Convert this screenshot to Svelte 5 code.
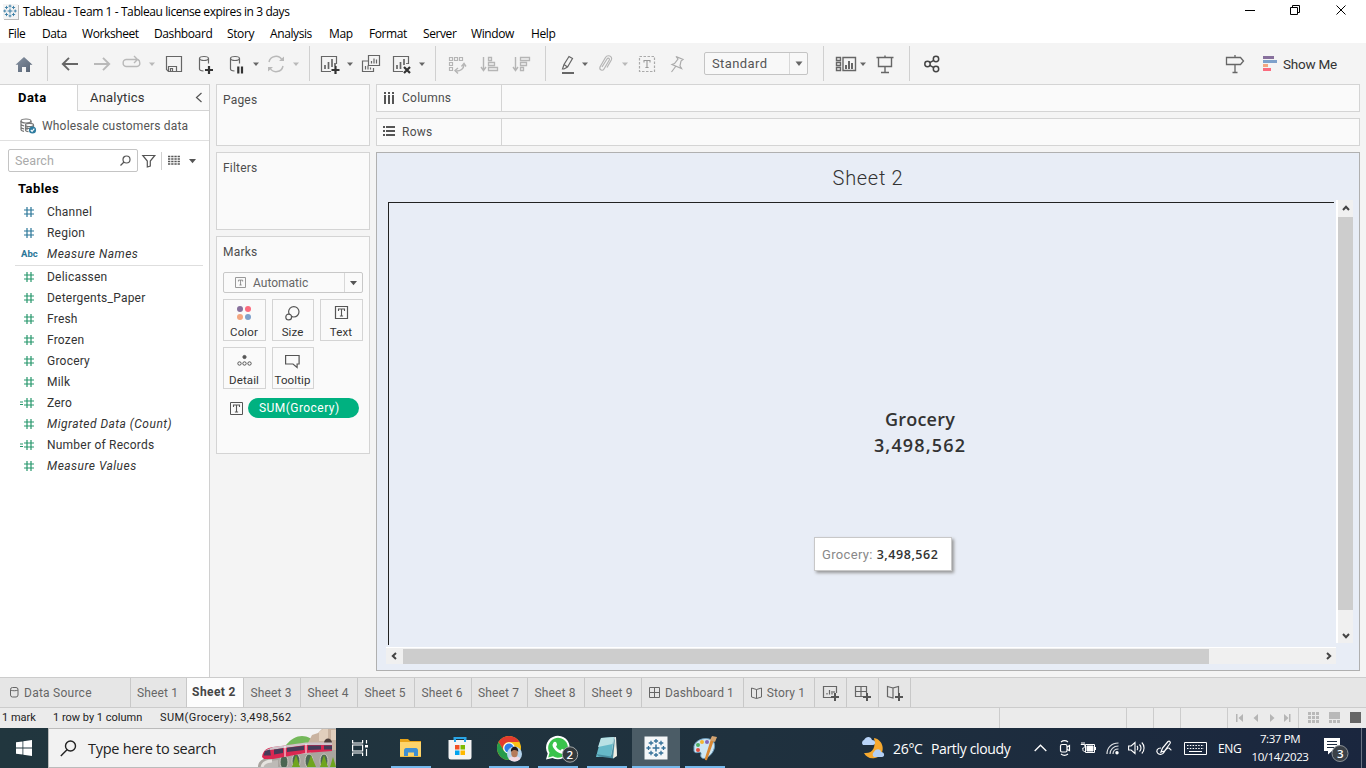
<script>
  const menus = [
    ['File', 34], ['Data', 40], ['Worksheet', 72], ['Dashboard', 73], ['Story', 43], ['Analysis', 59],
    ['Map', 40], ['Format', 54], ['Server', 48], ['Window', 60], ['Help', 40]
  ];

  const plus = (x, y, c = '#333') => `<path d="M${x} ${y - 4}v8M${x - 4} ${y}h8" stroke="${c}" stroke-width="2.2"/>`;
  const letterT = (x, y, c) => `<path d="M${x - 3} ${y - 1.5}v-2h6v2M${x} ${y - 3.5}v7M${x - 1.6} ${y + 3.5}h3.2" stroke="${c}" stroke-width="1.1"/>`;
  const tri = (x, y, c = '#666') => `<path d="M${x - 3} ${y - 1.5}h6l-3 3.6z" fill="${c}"/>`;
  const cyl = '<path d="M13.5 9.5V4.5M4.5 4.5v10.5c0 1 2 1.8 4 2" /><ellipse cx="9" cy="4.5" rx="4.5" ry="2"/>';
  const cross = (x, y, s, w, c) => `<path d="M${x - s} ${y}h${2 * s}M${x} ${y - s}v${2 * s}" stroke="${c}" stroke-width="${w}"/>`;
  const tableau = (c) =>
    cross(10, 10, 3.4, 1.5, c) + cross(10, 3, 2.1, 1.3, c) + cross(10, 17, 2.1, 1.3, c) + cross(2.500, 10, 2.1, 1.3, c) + cross(17.500, 10, 2.1, 1.3, c) +
    cross(5, 5, 2.3, 1.3, c) + cross(15, 5, 2.3, 1.3, c) + cross(5, 15, 2.3, 1.3, c) + cross(15, 15, 2.3, 1.3, c);

  const icons = {
    home: '<defs><linearGradient id="hg" x2="1" y2="1"><stop stop-color="#8793a3"/><stop offset="1" stop-color="#566273"/></linearGradient></defs><path d="M10 3L1.5 10.8H4V18h4v-5h4v5h4v-7.2h2.5z" fill="url(#hg)" stroke="none"/>',
    back: '<path d="M18 10H3M9 3.8L2.8 10 9 16.2" stroke-width="1.9"/>',
    forward: '<path d="M2 10h15M11 3.8l6.2 6.2-6.2 6.2" stroke="#b9b9b9" stroke-width="1.9"/>',
    redo: '<path d="M10 5.5H5a3 3 0 0 0-2.8 3.5A3 3 0 0 0 5 12.5h11a3 3 0 0 0 2.8-3.5c0-1.5-.8-3-2-3.5" stroke="#b9b9b9" stroke-width="1.4"/><path d="M10 5.5h6M13 2l3.5 3.5L13 9" stroke="#b9b9b9" stroke-width="1.4"/>',
    save: '<path d="M2.500 2.500h15v15H4.500l-2-2z"/><path d="M4.500 17.500v-5h8v5M6.500 17v-2.500h2V17"/>',
    dbadd: cyl + plus(14, 16),
    dbpause: cyl + '<path d="M12.3 12.5v7M16 12.5v7" stroke="#333" stroke-width="2.2"/>',
    refresh: '<path d="M3 8a7 7 0 0 1 13-2M17 12a7 7 0 0 1-13 2" stroke="#b9b9b9" stroke-width="1.5"/><path d="M13 7h5V2.500zM7 13H2v4.500z" fill="#b9b9b9" stroke="none"/>',
    newsheet: '<path d="M16.500 10V2.500h-15v15H11"/><path d="M5 15v-4M8.500 15V8M12 13V5M15 12V9" stroke-width="1.700"/>' + plus(15.5, 16),
    duplicate: '<path d="M8 7H1.500v10.500h11V14" /><path d="M7.500 1.500h11v10h-11z"/><path d="M10.500 9.500V7M13 9.500V4.500M15.500 9.500v-4M4.500 15.500V12M7 15.500v-4M9.500 15.500v-2" stroke-width="1.200"/>',
    clear: '<path d="M16.500 10V2.500h-15v15H11"/><path d="M5 15v-4M8.500 15V8M12 11V5M15 10V9" stroke-width="1.700"/><path d="M12 13l6 6M18 13l-6 6" stroke="#333" stroke-width="2.200"/>',
    swap: '<g stroke="#b5b5b5"><path d="M2.500 3.500h3v3h-3zM7.500 3.500h3v3h-3zM12.500 3.500h3v3h-3zM2.500 8.500h3v3h-3zM2.500 13.500h3v3h-3z"/><path d="M8.500 17c5 .5 8.500-2.500 8.500-6.500" stroke-width="1.400"/><path d="M14.500 12.500L17 9.500l2 3M11 14l-3 2.500 3 3" stroke-width="1.400"/></g>',
    asc: '<g stroke="#b5b5b5"><path d="M4.500 3v13M2 13l2.500 3.500L7 13" stroke-width="1.400"/><path d="M9.500 3.500h3v3h-3zM9.500 8.500h6v3h-6zM9.500 13.500h9v3h-9z" stroke-width="1.300"/></g>',
    desc: '<g stroke="#b5b5b5"><path d="M4.500 3v13M2 13l2.500 3.500L7 13" stroke-width="1.400"/><path d="M9.500 3.500h9v3h-9zM9.500 8.500h6v3h-6zM9.500 13.500h3v3h-3z" stroke-width="1.300"/></g>',
    highlight: '<path d="M4.500 15L6 10.500 11 2.500l3.500 2-5 8.500L6 15zM6 10.500l3.500 2.500"/><path d="M4 19h12" stroke-width="2"/>',
    clip: '<path d="M7 13l5-8c1-1.500 3-.5 2.300 1L9 15c-1.200 2.200-5 1.300-4-2l5.500-9.500c2-3.200 7.500-1.500 5.800 2.500L12 13.500" stroke="#b5b5b5"/>',
    text: '<path d="M2.500 2.500h15v15h-15z" stroke="#aaa" stroke-dasharray="2.500 1.500"/>' + letterT(10, 10, '#999'),
    pin: '<path d="M9 2.500l7 3-2 1.500-1 5 1.500 2.500-9.500-4 2.500-1 3.500-4.500zM9 12l-4.500 6" stroke="#aaa"/>',
    fit: '<path d="M1.500 3.500h4v3h-4zM1.500 8.500h4v3h-4zM1.500 13.500h4v3h-4zM8 3.500h12.500v13H8z" stroke-width="1.400"/><path d="M11 15v-4M14 15V7M17 15V9" stroke-width="2"/>',
    present: '<path d="M1.500 3.500h17M3.500 4v8.500h13V4M10 12.500V18M6 18.500h8M10 1.500v2" stroke-width="1.400"/>',
    share: '<g stroke="#444" stroke-width="1.500"><circle cx="5.500" cy="10" r="2.700"/><circle cx="14" cy="5" r="2.700"/><circle cx="14" cy="15" r="2.700"/><path d="M7.800 8.700l4-2.300M7.800 11.300l4 2.300"/></g>',
    guide: '<path d="M1.500 3.500h14l3 3.500-3 3.500h-14zM10 1v2.500M10 10.500V18M7.500 18.500h5" stroke-width="1.300"/>',
    filter: '<path d="M.8 1.500h12L8.300 7v5l-3 1V7z" stroke="#555"/>',
    list: '<path d="M0 2.500h12M0 5h12M0 7.500h12M0 10h12" stroke="#555" stroke-width="1.300" stroke-dasharray="2.300 .9"/>',
    dbsource: '<g stroke="#777"><ellipse cx="6" cy="3" rx="5" ry="2"/><path d="M1 3v8.500c0 1 1.500 1.500 3 1.800M11 3v2M1 6c0 1 1 1.600 3 1.800M1 9c0 1 1 1.600 3 1.800"/><ellipse cx="9.500" cy="7" rx="4" ry="1.700"/><path d="M5.500 7v5c0 1 1 1.500 3 1.700M13.500 7v3M5.500 10.500h6M7 9v3"/></g><circle cx="12.500" cy="12" r="3.600" fill="#2e7ca0" stroke="none"/><path d="M10.800 12l1.300 1.300 2.200-2.600" stroke="#fff"/>',
    sheetTab: '<path d="M13.500 8V1.500h-13v11H9"/><path d="M4 9.500V8M6.500 9.500V5M9 9.500V6M11 8V6"/>' + cross(12, 12, 4, 2, '#555'),
    dashTab: '<path d="M11.500 8V1.500H.5v10H8M6 1.500v10M.5 6.500h11"/>' + cross(12, 12, 4, 2, '#555'),
    storyTab: '<path d="M6 3L.5 1.500v10L6 13V3l5.500-1.500V8M6 3v10"/>' + cross(12, 12, 4, 2, '#555')
  };

  // [icon, gap before]; "|" is a divider, "v" a caret, "v-" a disabled caret
  const tools = [
    ['home', 14], ['|', 13], ['back', 12], ['forward', 12], ['redo', 9], ['v-', 7], ['save', 8], ['dbadd', 11], ['dbpause', 11],
    ['v', 6], ['refresh', 6], ['v-', 6], ['|', 9], ['newsheet', 10], ['v', 6], ['duplicate', 7], ['clear', 11], ['v', 6],
    ['|', 9], ['swap', 11], ['asc', 12], ['desc', 12], ['|', 14], ['highlight', 12], ['v', 3], ['clip', 6], ['v-', 6],
    ['text', 8], ['pin', 10], ['select', 17], ['|', 15], ['fit', 11], ['v', 2], ['present', 8], ['|', 14], ['share', 12]
  ];

  const dims = [['Channel', 'n'], ['Region', 'n'], ['Measure Names', 'a', true]];
  const measures = [
    ['Delicassen', 'n'], ['Detergents_Paper', 'n'], ['Fresh', 'n'], ['Frozen', 'n'], ['Grocery', 'n'], ['Milk', 'n'],
    ['Zero', 'c'], ['Migrated Data (Count)', 'n', true], ['Number of Records', 'c'], ['Measure Values', 'n', true]
  ];
  const sheets = [56, 57, 57, 57, 57, 57, 56, 57, 57];
</script>

{#snippet icon(name, w = 20, h = 20)}
  <svg class="ic" width={w} height={h} viewBox="0 0 {w} {h}" fill="none" stroke="#666" stroke-width="1.2">{@html icons[name]}</svg>
{/snippet}

{#snippet field([name, kind, italic], color)}
  <div class="field">
    {#if kind === 'a'}
      <span class="abc">Abc</span>
    {:else}
      <svg class="hash" width="18" height="12" viewBox="0 0 18 12" fill="none" stroke={color} stroke-width="1.2">
        <path d="M7 1v10M11 1v10M4 4h10M4 8h10" />
        {#if kind === 'c'}<path d="M0 5h3M0 7.500h3" />{/if}
      </svg>
    {/if}
    <span class:italic>{name}</span>
  </div>
{/snippet}

<div class="app">
  <header class="title">
    <span class="logo"><svg width="14" height="14" viewBox="0 0 20 20">{@html tableau('#3a7ea6')}</svg></span>
    <span class="cap">Tableau - Team 1 - Tableau license expires in 3 days</span>
    <svg class="win" width="110" height="20" viewBox="0 0 110 20" fill="none" stroke="#000">
      <path d="M0 10.500h10M45.500 7.500h7v7h-7zM47.500 7.500v-2h7v7h-2M91.500 5.500l9 9M100.500 5.500l-9 9" />
    </svg>
  </header>
  <nav class="menu">{#each menus as [m, w]}<span style:width="{w}px">{m}</span>{/each}</nav>

  <div class="toolbar">
    {#each tools as [t, g]}
      <div class="tool" style:margin-left="{g}px">
        {#if t === '|'}<i class="bar"></i>
        {:else if t[0] === 'v'}<svg width="8" height="8">{@html tri(4, 4, t === 'v' ? '#666' : '#b9b9b9')}</svg>
        {:else if t === 'select'}
          <div class="select"><span>Standard</span><b><svg width="10" height="8"><path d="M1.500 1.500h7L5 6z" fill="#666" /></svg></b></div>
        {:else}{@render icon(t, t === 'fit' ? 22 : 20)}{/if}
      </div>
    {/each}
    <div class="right">
      {@render icon('guide')}
      <svg class="sm" width="14" height="16"><path d="M0 0h11v3H0z" fill="#87709c" /><path d="M0 4h14v3H0z" fill="#7ea1cb" /><path d="M0 8h5v3H0z" fill="#f3a680" /><path d="M0 12h8v3H0z" fill="#fb6b7e" /></svg>
      <span>Show Me</span>
    </div>
  </div>

  <main>
    <aside class="data">
      <div class="ptabs">
        <b>Data</b>
        <div><span>Analytics</span><svg width="8" height="12" fill="none" stroke="#555" stroke-width="1.2"><path d="M6.500 1L1.500 5.500l5 4.500" /></svg></div>
      </div>
      <div class="source">{@render icon('dbsource', 17, 16)}<span>Wholesale customers data</span></div>
      <div class="find">
        <div class="box"><span>Search</span><svg width="11" height="11" fill="none" stroke="#555" stroke-width="1.2"><circle cx="6.500" cy="4.500" r="3.500" /><path d="M4 7L.5 10.500" /></svg></div>
        {@render icon('filter', 14, 14)}
        <i></i>
        {@render icon('list', 12, 14)}
        <svg width="8" height="6"><path d="M0 1h7L3.500 5.200z" fill="#555" /></svg>
      </div>
      <h4>Tables</h4>
      {#each dims as f}{@render field(f, '#2a7698')}{/each}
      <hr />
      {#each measures as f}{@render field(f, '#27976c')}{/each}
    </aside>

    <section class="shelves">
      <div class="card pages">Pages</div>
      <div class="card filters">Filters</div>
      <div class="card marks">
        <div class="mh">Marks</div>
        <div class="auto">
          <svg width="11" height="11" fill="none"><path d="M.5.5h10v10H.5z" stroke="#999" />{@html `<g transform="translate(1.700 1.700) scale(.7)">${letterT(5.5, 5.5, '#777')}</g>`}</svg>
          <span>Automatic</span>
          <b><svg width="9" height="6"><path d="M1 1h7L4.500 5.200z" fill="#555" /></svg></b>
        </div>
        <div class="btns">
          <div class="btn"><svg width="14" height="14"><circle cx="3" cy="3" r="3" fill="#87709c" /><circle cx="11" cy="3" r="3" fill="#fb6b7e" /><circle cx="3" cy="11" r="3" fill="#f3a680" /><circle cx="11" cy="11" r="3" fill="#7ea1cb" /></svg>Color</div>
          <div class="btn"><svg width="15" height="15" fill="none" stroke="#555" stroke-width="1.2"><circle cx="8.800" cy="5.800" r="5.200" /><circle cx="3.700" cy="11" r="2.900" fill="#fafafa" /></svg>Size</div>
          <div class="btn"><svg width="13" height="13" fill="none" stroke="#555" stroke-width="1.200"><path d="M.5.5h12v12H.5z" />{@html letterT(6.5, 6.5, '#555')}</svg>Text</div>
          <div class="btn"><svg width="15" height="13" fill="none" stroke="#555"><circle cx="7.500" cy="3" r="1.600" fill="#555" /><circle cx="2.500" cy="9.500" r="1.700" /><circle cx="7.500" cy="9.500" r="1.700" /><circle cx="12.500" cy="9.500" r="1.700" /></svg>Detail</div>
          <div class="btn"><svg width="15" height="14" fill="none" stroke="#555" stroke-width="1.200"><path d="M.6 1.500h13.500v8.500h-2v3.500L8 10H.6z" /></svg>Tooltip</div>
        </div>
        <div class="pillrow">
          <svg width="13" height="13" fill="none" stroke="#555"><path d="M.5.5h12v12H.5z" />{@html letterT(6.5, 6.5, '#555')}</svg>
          <span class="pill">SUM(Grocery)</span>
        </div>
      </div>
    </section>

    <section class="work">
      <div class="shelf"><div><svg width="12" height="12" fill="#555"><path d="M1 0h2v2H1zM5 0h2v2H5zM9 0h2v2H9zM1 3h2v9H1zM5 3h2v9H5zM9 3h2v9H9z" /></svg>Columns</div></div>
      <div class="shelf"><div><svg width="12" height="12" fill="#555"><path d="M0 0h2v2H0zM0 4h2v2H0zM0 8h2v2H0zM3 0h9v2H3zM3 4h9v2H3zM3 8h9v2H3z" /></svg>Rows</div></div>
      <div class="viz">
        <h2>Sheet 2</h2>
        <div class="pane">
          <div class="frame">
            <p>Grocery<br /><span>3,498,562</span></p>
            <div class="tip"><span>Grocery:</span> 3,498,562</div>
          </div>
          <div class="vs">
            <svg width="8" height="6" fill="none" stroke="#444" stroke-width="2"><path d="M1 5l3-3.200L7 5" /></svg>
            <i></i>
            <svg width="8" height="6" fill="none" stroke="#444" stroke-width="2"><path d="M1 1l3 3.200L7 1" /></svg>
          </div>
          <div class="hs">
            <svg width="6" height="8" fill="none" stroke="#444" stroke-width="2"><path d="M5 1L1.800 4 5 7" /></svg>
            <i></i>
            <svg width="6" height="8" fill="none" stroke="#444" stroke-width="2"><path d="M1 1l3.200 3L1 7" /></svg>
          </div>
        </div>
      </div>
    </section>
  </main>

  <div class="tabs">
    <div class="tab src"><svg width="9" height="12" fill="none" stroke="#666"><rect x=".5" y=".5" width="7.500" height="9.500" rx="2" /><path d="M.5 3c2 1 5.500 1 7.500 0" /></svg>Data Source</div>
    {#each sheets as w, i}<div class="tab" class:on={i === 1} style:width="{w}px">Sheet {i + 1}</div>{/each}
    <div class="tab dash"><svg width="11" height="11" fill="none" stroke="#666"><path d="M.5.5h10v10H.5zM5.500.5v10M.5 5.500h10" /></svg>Dashboard 1</div>
    <div class="tab story"><svg width="11" height="12" fill="none" stroke="#666"><path d="M5.500 2.500L.5 1v9l5 1.500 5-1.500V1zM5.500 2.500v9" /></svg>Story 1</div>
    <div class="tab new">{@render icon('sheetTab', 16, 16)}</div>
    <div class="tab new">{@render icon('dashTab', 16, 16)}</div>
    <div class="tab new">{@render icon('storyTab', 16, 16)}</div>
  </div>

  <div class="status">
    <span class="s1">1 mark</span><span class="s2">1 row by 1 column</span><span class="s3">SUM(Grocery): 3,498,562</span>
    <div class="cells">
      <i style:width="127px"></i><i style:width="27px"></i><i style:width="27px"></i><i style:width="47px"></i>
      <i style:width="71px"><svg width="54" height="8" fill="#b5b5b5"><path d="M0 0h1.500v8H0zM7 0v8L2.500 4zM22 0v8l-4.500-4zM34 0v8l4.500-4zM48 0v8l4.500-4zM53 0h1.500v8H53z" /></svg></i>
      <i style:width="67px"><svg width="54" height="12" fill="#b9b9b9"><path d="M0 0h3v3H0zM4 0h3v3H4zM8 0h3v3H8zM0 4h3v3H0zM4 4h3v3H4zM8 4h3v3H8zM0 8h3v3H0zM4 8h3v3H4zM8 8h3v3H8zM21 0h11v7H21zM21 8h3v3h-3zM25 8h3v3h-3zM29 8h3v3h-3z" /><path d="M42 0h11v11H42z" fill="#666" /></svg></i>
    </div>
  </div>

  <footer>
    <div class="start"><svg width="16" height="16" fill="#fff"><path d="M0 2.300L6.500 1.400v6.200H0zM7.300 1.300L16 0v7.600H7.300zM0 8.400h6.500v6.200L0 13.700zM7.300 8.400H16V16l-8.700-1.300z" /></svg></div>
    <div class="search">
      <svg width="17" height="17" fill="none" stroke="#222" stroke-width="1.400"><circle cx="10.500" cy="6" r="5" /><path d="M7 9.700L.8 16" /></svg>
      <span>Type here to search</span>
      <svg class="train" width="80" height="38" viewBox="0 0 80 38">
        <path d="M30 16C40 4 52 4 62 16v4H30z" fill="#74b85a" />
        <path d="M52 14l4-8 6-2 4-4h14v38H60z" fill="#c9b3a0" /><path d="M63 3l4-3h5v12h-9zM75 1h5v10h-5z" fill="#e1cfbd" />
        <path d="M68 14c0-6 8-6 8 0v6h-8z" fill="#4d403c" />
        <path d="M2 38c0-6 5-9 12-9l62-8h4v17z" fill="#a9a59f" />
        <path d="M5 38c1-4 5-6 10-6l7-1v7z" fill="#bdbab6" /><path d="M6 38c1-4 5-6 10-6" stroke="#e5e3df" stroke-width="3" fill="none" />
        <g fill="#4b6652" stroke="#cbc7c1"><ellipse cx="28" cy="33" rx="4" ry="7" /><ellipse cx="40" cy="32" rx="4" ry="7" /><ellipse cx="53" cy="32" rx="4" ry="7" /><ellipse cx="68" cy="32" rx="4" ry="7" /></g>
        <path d="M36 38l4-12 4 12zM51 38l4-12 5 12zM64 38l4-12 4 12zM74 38l3-10 3 10z" fill="#6fa51e" />
        <path d="M6 28C7 21 11 19 17 18L50 14h26v8L50 24 17 30H8z" fill="#d92751" />
        <path d="M8 22l9-4L50 13.500h26v2.500H50L14 21z" fill="#cfc4ca" />
        <path d="M9 22l5-1.500 1 6H7.500zM18 20.500l9-1.300V24l-9 1.500zM31 18.700l17-2v4.300l-17 2zM52 16.500h13v4L52 21zM68 16.500h8v4h-8z" fill="#453b58" />
        <path d="M29 17v11M50 15v9" stroke="#fff" stroke-width="1" />
      </svg>
    </div>
    <div class="tk view"><svg width="17" height="16" fill="none" stroke="#fff" stroke-width="1.200"><path d="M.6 0v3h10V0M.6 5h10v6H.6zM.6 16v-3h10v3M14.500 0v3.500M14.500 9v7" /><path d="M13 5h3v2.500h-3z" fill="#fff" stroke="none" /></svg></div>
    <div class="tk run"><svg width="24" height="24"><path d="M1 3h8l2 2h11v16H1z" fill="#e8a317" /><path d="M1 6h21v14.500H1z" fill="#fdd46b" /><path d="M5 20v-5.500C5 13 6 12 7 12h10c1 0 2 1 2 2.500V20h-4v-3.500H9V20z" fill="#3f8fd2" /></svg></div>
    <div class="tk"><svg width="24" height="26"><path d="M6.500 8V3h11v5" fill="none" stroke="#29a6e8" stroke-width="2" /><path d="M.5 5h23v17a2.500 2.500 0 0 1-2.500 2.500H3A2.500 2.500 0 0 1 .5 22z" fill="#f4f4f4" /><path d="M7 4v3M17 4v3" stroke="#29a6e8" stroke-width="2" /><path d="M7 10h4.500v4.500H7z" fill="#f25022" /><path d="M12.500 10H17v4.500h-4.500z" fill="#7fba00" /><path d="M7 15.500h4.500V20H7z" fill="#00a4ef" /><path d="M12.500 15.500H17V20h-4.500z" fill="#ffb900" /></svg></div>
    <div class="tk run"><svg width="26" height="26"><circle cx="13" cy="13" r="12" fill="#fbc116" /><path d="M2.600 7A12 12 0 0 1 23.400 7H13a6 6 0 0 0-5.200 9z" fill="#e33b2e" /><path d="M2.600 7A12 12 0 0 0 13 25l5-9H8z" fill="#269b4b" /><circle cx="13" cy="13" r="5.800" fill="#fff" /><circle cx="13" cy="13" r="4.600" fill="#2f7de8" /><circle cx="18.500" cy="19" r="7.500" fill="#b4d4ed" /><path d="M12.500 23.500c2-3 10-3 12 0-3 4-9 4-12 0z" fill="#f0d9e3" /><ellipse cx="18.500" cy="18" rx="3.300" ry="4.200" fill="#b57b5b" /><path d="M15 17c-1-7 8-7 7.200 0-1-2-5-3-7.200 0z" fill="#20191a" /></svg></div>
    <div class="tk run wa"><svg width="34" height="26"><path d="M1 24.500l1.700-6A11.800 11.800 0 1 1 7.500 23z" fill="#fff" /><path d="M3.200 22.500l1.300-4.700A9.900 9.900 0 1 1 8 21.300z" fill="#3ac34c" /><path d="M8.500 7.500c2-2 3.500.5 3.500 2.500l-1 1.500c1 2 2.500 3.200 4.500 4l1.500-1.700 3.200 1.700c0 3-3.200 3.700-5.200 2.700-4-1.500-7.500-5.500-7.500-8.500z" fill="#fff" /><circle cx="25" cy="19.500" r="7.700" fill="#333a3d" stroke="#a0a5a7" /></svg><em>2</em></div>
    <div class="tk run"><svg width="26" height="26"><path d="M8 4l14-2 1 18-4 3z" fill="#e9edeb" /><path d="M7 3l13-1-3 20H2z" fill="#66b9c8" /><path d="M7 3l13-1-1.500 7L4 12z" fill="#b9e1e4" /><path d="M2 19l15 2.500 3.500-19 2 18-3 3-14.500-2z" fill="#498da0" /><path d="M21 4l2 17-4 2.500z" fill="#f1eee2" /></svg></div>
    <div class="tk active"><svg width="24" height="24" viewBox="0 0 24 24"><path d="M.5.5h23v23H.5z" fill="#f5f7f8" /><g transform="translate(2 2)">{@html tableau('#357199')}</g></svg></div>
    <div class="tk run"><svg width="26" height="26"><path d="M2 11C4 4 15 1 21 6c4 5 0 14-7 17-4 1.500-6-1-5-4 1-4-6 1-7-3z" fill="#cfe7f4" stroke="#6b9cbd" /><circle cx="6" cy="15" r="2" fill="#df4c3f" /><circle cx="6" cy="10" r="2" fill="#4bad65" /><circle cx="10" cy="7" r="2" fill="#f4b731" /><circle cx="15" cy="7" r="2" fill="#8167bb" /><path d="M22 5l-7 20c-2 1-2.500-1-2-2L19 4z" fill="#d98834" /><path d="M18 5l2-4 5 1-2 5z" fill="#d2a371" /></svg></div>
    <div class="tray">
      <svg class="weather" width="26" height="24"><path d="M14 2c11 2 12 18 1 20-5 1-9-1-11-5 9 1 12-6 10-15z" fill="#f7a92f" /><path d="M3 9a3 3 0 0 1 1-5c2-4 7-4 8 0 4 0 4 5 1 5z" fill="#b9d4f8" /><path d="M14 21a3 3 0 0 1 0-5c2-4 7-3 7 0 4 0 4 5 1 5z" fill="#b3cff5" /></svg>
      <span class="temp">26°C</span><span class="cond">Partly cloudy</span>
      <svg class="up" width="13" height="8" fill="none" stroke="#fff" stroke-width="1.300"><path d="M.7 7l5.800-5.800L12.300 7" /></svg>
      <svg class="cam" width="12" height="16" fill="none" stroke="#fff" stroke-width="1.200"><rect x="1.500" y="4.500" width="6.500" height="7.500" rx="1.500" /><path d="M8 7l2.500-1.500v5L8 9.500M2 2c2-1.500 5-1.500 7 0M2 14c2 1.500 5 1.500 7 0" /></svg>
      <svg class="bat" width="17" height="12" fill="none" stroke="#fff"><path d="M5.500 2.500h9v8h-9zM15.500 5v3M2 0v2M4 0v2M.8 2.500h4v2c0 1-1 1.500-2 1.500M2.800 6c0 2 0 3.500 2 3.500" /><path d="M7 4h6v5H7z" fill="#fff" /></svg>
      <svg class="wifi" width="14" height="13" fill="none" stroke="#fff" stroke-width="1.200"><path d="M1 12C1 5.500 5.500 1 12.500 1M4 12c0-4.500 3.500-8 8.500-8M7 12c0-3 2-5 5.500-5" opacity=".85" /><circle cx="11" cy="10.800" r="1.700" fill="#fff" stroke="none" /></svg>
      <svg class="vol" width="17" height="14" fill="none" stroke="#fff" stroke-width="1.100"><path d="M.6 5v4h2.500L7 12.500v-11L3.100 5zM9 5c1 1 1 3 0 4M11.500 3.500c2 2 2 5 0 7M13.800 1.500c3 3 3 8 0 11" /></svg>
      <svg class="pen" width="17" height="16" fill="none" stroke="#fff" stroke-width="1.200"><path d="M5 12l1.500-4L12 1.500c1.500-1 3 .5 2 2L8.500 11zM5 8c-4 0-5 3-3.500 5s5 1.500 6 0 3-5 5-5 1 2 3 2" /></svg>
      <svg class="kb" width="23" height="13" fill="none" stroke="#fff"><path d="M.5.5h22v12H.5z" /><path d="M3 3.500h17M3 6.500h17" stroke-dasharray="1.500 1.300" /><path d="M5 9.500h13" /></svg>
      <span class="eng">ENG</span>
      <div class="clock"><span>7:37 PM</span><span>10/14/2023</span></div>
      <div class="note"><svg width="25" height="26"><path d="M0 1h16v13H8l-4 3.500V14H0z" fill="#fff" /><path d="M3 4.500h10M3 7.500h10M3 10.500h7" stroke="#1e2c40" /><circle cx="16" cy="16.500" r="8" fill="#3b4148" stroke="#8a9095" /></svg><em>3</em></div>
      <i class="peek"></i>
    </div>
  </footer>
</div>

<style>
  :global(body) { margin: 0; overflow: hidden; }
  .app { width: 1366px; height: 768px; display: flex; flex-direction: column; background: #f4f4f4; font-family: Roboto, sans-serif; font-size: 12px; color: #333; white-space: nowrap; overflow: hidden; }
  .app * { box-sizing: border-box; }
  svg { display: block; flex: none; overflow: visible; }
  .title { height: 23px; background: #fff; display: flex; align-items: center; padding-left: 3px; font-family: "Open Sans", sans-serif; color: #000; }
  .logo { width: 15px; height: 15px; background: #f4f4f4; box-shadow: 1px 1px 0 #bbb; margin-right: 5px; }
  .cap { letter-spacing: -.41px; }
  .win { margin: -3px 11px 0 auto; }
  .menu { height: 20px; background: #fff; display: flex; padding-left: 8px; font-family: "Open Sans", sans-serif; line-height: 21px; letter-spacing: -.4px; color: #000; }
  .toolbar { height: 41px; display: flex; align-items: center; }
  .tool { display: flex; align-items: center; height: 40px; }
  .bar { width: 1px; height: 35px; background: #d0d0d0; }
  .select { width: 104px; height: 23px; border: 1px solid #c4c4c4; border-radius: 2px; display: flex; background: #f8f8f8; font-size: 13px; line-height: 21px; padding-left: 7px; letter-spacing: .4px; color: #555; }
  .select span { flex: 1; }
  .select b { width: 18px; border-left: 1px solid #d8d8d8; display: flex; align-items: center; justify-content: center; }
  .right { margin-left: auto; display: flex; align-items: center; padding-right: 29px; font-size: 13.500px; }
  .right span { width: 54px; letter-spacing: -.25px; }
  .sm { margin: 0 6px 0 18px; }
  main { height: 593px; display: flex; }
  .data { width: 210px; background: #fff; border-right: 1px solid #d0d0d0; border-top: 1px solid #d4d4d4; }
  .ptabs { display: flex; height: 26px; line-height: 25px; font-size: 13px; }
  .ptabs b { width: 77px; padding-left: 18px; color: #000; letter-spacing: .45px; }
  .ptabs div { flex: 1; background: #fafafa; border: solid #d4d4d4; border-width: 0 0 1px 1px; display: flex; align-items: center; justify-content: space-between; padding: 0 6px 0 12px; letter-spacing: .2px; }
  .source { height: 30px; border-bottom: 1px solid #e0e0e0; display: flex; align-items: center; padding-left: 20px; color: #555; }
  .source span { margin-left: 5px; letter-spacing: .18px; font-size: 12px; }
  .find { display: flex; align-items: center; margin: 8px 0 0 8px; height: 23px; }
  .box { width: 130px; height: 23px; border: 1px solid #c4c4c4; border-radius: 2px; display: flex; align-items: center; justify-content: space-between; padding: 0 6px; color: #aaa; font-size: 12.500px; letter-spacing: .1px; margin-right: 4px; }
  .find i { width: 1px; height: 18px; background: #d0d0d0; margin: 0 6px 0 5px; }
  .find > :global(svg:last-child) { margin-left: 9px; }
  h4 { margin: 7px 0 -7px 18px; font: bold 13px/20px Roboto, sans-serif; color: #000; height: 29px; letter-spacing: .45px; }
  .field { height: 21px; display: flex; align-items: center; padding-left: 20px; letter-spacing: .22px; }
  .field > span:last-child { margin-left: 9px; }
  .field > .italic { font-style: italic; letter-spacing: .48px; }
  .abc { width: 18px; font-weight: 700; font-size: 9.500px; color: #2a7698; letter-spacing: 0; padding-left: 1px; }
  hr { border: 0; height: 1px; margin: 1px 6px 0 15px; background: #dedede; }
  .shelves { width: 166px; padding: 0 0 0 6px; }
  .card { width: 154px; border: 1px solid #d4d4d4; background: #fafafa; padding: 8px 6px; line-height: 14px; color: #4d4d4d; margin-bottom: 6px; letter-spacing: .2px; }
  .pages { height: 62px; }
  .filters { height: 78px; }
  .marks { height: 218px; }
  .auto { height: 21px; width: 140px; border: 1px solid #c8c8c8; border-radius: 2px; display: flex; align-items: center; margin-top: 13px; padding-left: 11px; color: #666; letter-spacing: 0; }
  .auto span { flex: 1; padding-left: 7px; }
  .auto b { width: 18px; height: 19px; border-left: 1px solid #d8d8d8; display: flex; align-items: center; justify-content: center; }
  .btns { display: grid; grid-template-columns: 43px 42px 43px; gap: 6px; margin-top: 6px; }
  .btn { height: 42px; border: 1px solid #d4d4d4; display: flex; flex-direction: column; align-items: center; justify-content: space-between; padding: 6px 1px 1px 0; font-size: 11.500px; color: #333; letter-spacing: .1px; }
  .pillrow { display: flex; align-items: center; margin-top: 9px; padding-left: 7px; }
  .pill { margin-left: 5px; width: 111px; height: 20px; border-radius: 10px; background: #00b180; color: #fff; padding-left: 11px; line-height: 20px; letter-spacing: .45px; }
  .work { flex: 1; padding-right: 6px; }
  .shelf { height: 28px; border: 1px solid #d4d4d4; background: #fafafa; margin-bottom: 6px; color: #4d4d4d; letter-spacing: .25px; }
  .shelf div { width: 125px; height: 26px; border-right: 1px solid #d4d4d4; display: flex; align-items: center; gap: 7px; padding-left: 6px; }
  .viz { height: 519px; border: 1px solid #b0b0b0; background: #e8edf6; }
  h2 { margin: 0; height: 49px; line-height: 50px; text-align: center; font-weight: 300; font-size: 20px; letter-spacing: .7px; color: #333; padding-right: 0; }
  .pane { display: grid; grid-template: 446px 17px / 950px 17px; padding-left: 10px; }
  .frame { position: relative; margin-left: 1px; width: 946px; height: 443px; border: solid #222; border-width: 1px 0 0 1px; }
  .frame p { margin: 203px 0 0 117px; text-align: center; font: 600 18px/26px "Open Sans", sans-serif; letter-spacing: .2px; color: #333; }
  .frame p span { letter-spacing: 1.15px; }
  .tip { position: absolute; left: 425px; top: 334px; width: 138px; height: 34px; border: 1px solid #c8c8c8; background: #fff; box-shadow: 2px 2px 3px #999; padding-left: 7px; font: 600 12.500px/33px "Open Sans", sans-serif; letter-spacing: .55px; color: #333; }
  .tip span { font-family: Roboto, sans-serif; font-weight: 400; color: #888; font-size: 13px; letter-spacing: .35px; }
  .vs { width: 17px; height: 443px; margin: -2px 0 0 -1px; border-left: 2px solid #fff; background: #f0f0f0; display: flex; flex-direction: column; align-items: center; justify-content: space-between; padding: 5px 0 4px; }
  .vs i { width: 15px; height: 393px; background: #cdcdcd; margin-bottom: 18px; margin-top: 0; }
  .hs { height: 17px; margin: -1px 1px 1px -1px; border-top: 1px solid #fff; background: #f0f0f0; display: flex; align-items: center; padding: 0 4px 0 5px; }
  .hs i { width: 806px; height: 15px; background: #cdcdcd; margin: 0 auto 0 6px; }
  .tabs { height: 31px; border: solid #ccc; border-width: 1px 0; background: #e6e6e6; display: flex; }
  .tab { height: 29px; border-right: 1px solid #c8c8c8; display: flex; align-items: center; justify-content: center; color: #666; font-size: 12px; letter-spacing: .15px; padding-right: 2px; }
  .on { background: #fcfcfc; font-weight: 700; color: #444; padding-bottom: 2px; letter-spacing: .4px; }
  .src { width: 131px; justify-content: flex-start; padding-left: 10px; gap: 5px; letter-spacing: .25px; }
  .dash { width: 102px; gap: 5px; letter-spacing: .1px; }
  .story { width: 71px; gap: 5px; }
  .new { width: 32px; padding: 0 0 0 1px; }
  .status { height: 20px; background: #ebebeb; display: flex; line-height: 20px; font-size: 11px; color: #222; }
  .s1 { width: 53px; padding-left: 2px; }
  .s2 { width: 107px; }
  .s3 { letter-spacing: .42px; }
  .cells { display: flex; margin-left: auto; border-left: 1px solid #ccc; }
  .cells i { border-right: 1px solid #ccc; display: flex; align-items: center; justify-content: center; }
  .cells i:last-child { border: 0; padding-left: 4px; }
  footer { height: 40px; background: linear-gradient(90deg, #21363e 0%, #1f313e 55%, #1a263e 100%); display: flex; color: #fff; font-family: "Open Sans", sans-serif; }
  .start { width: 48px; display: flex; align-items: center; justify-content: center; }
  .search { width: 288px; border: 1px solid #bbb; background: #f2f2f2; display: flex; align-items: center; padding-left: 11px; color: #222; font-size: 14.500px; }
  .search span { margin-left: 11px; letter-spacing: -.28px; flex: 1; }
  .train { margin-right: -1px; overflow: hidden; }
  .tk { position: relative; width: 48px; margin-right: 1px; display: flex; align-items: center; justify-content: center; }
  .view { margin-right: 3px; }
  .run { background: linear-gradient(#76b9ed, #76b9ed) 50% 100% / 40px 2px no-repeat; }
  .active { background: linear-gradient(#76b9ed, #76b9ed) 0 100% / 48px 2px no-repeat #4b5c66; }
  .wa svg { margin-left: 7px; }
  em { position: absolute; font: 600 11.500px/14px "Open Sans", sans-serif; color: #fff; }
  .wa em { right: 9px; top: 20px; }
  .tray { margin-left: auto; display: flex; align-items: center; }
  .temp { font-size: 14px; width: 38px; margin-left: 7px; letter-spacing: -.3px; }
  .cond { font-size: 14px; width: 103px; letter-spacing: -.35px; }
  .cam { margin-left: 12px; }
  .bat { margin-left: 9px; }
  .wifi { margin-left: 9px; }
  .vol { margin-left: 8px; }
  .pen { margin-left: 11px; }
  .kb { margin-left: 11px; }
  .eng { margin-left: 11px; font-size: 12px; width: 24px; letter-spacing: -.4px; }
  .clock { width: 58px; margin-left: 9px; display: flex; flex-direction: column; align-items: center; font-size: 11.500px; line-height: 18px; letter-spacing: -.4px; }
  .note { position: relative; margin: 3px 6px 0 15px; width: 31px; }
  .note em { left: 13px; top: 10px; }
  .peek { width: 1px; height: 40px; background: #6a7383; margin-right: 4px; }
</style>
